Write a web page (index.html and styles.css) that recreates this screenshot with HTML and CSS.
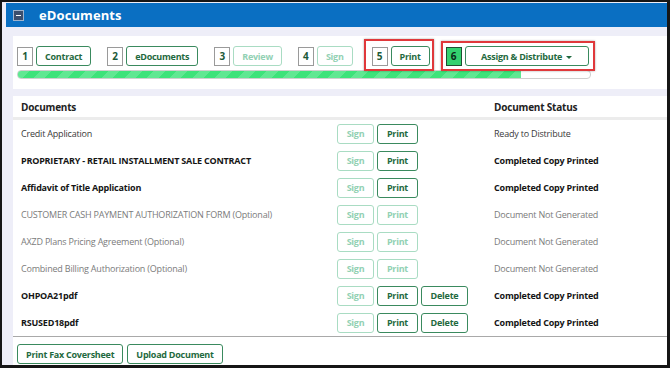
FILE: index.html
```html
<!DOCTYPE html>
<html lang="en">
<head>
  <meta charset="UTF-8" />
  <title>eDocuments</title>
  <link rel="stylesheet" href="styles.css">
</head>
<body>
  <div class="frame">
    <div class="panel-header">
      <span class="collapse-btn"><span class="minus"></span></span>
      <span class="panel-title">eDocuments</span>
    </div>

    <div class="panel-body">
      <div class="stepper">
        <div class="steps">
          <div class="step"><span class="step-num">1</span><button class="btn">Contract</button></div>
          <div class="step"><span class="step-num">2</span><button class="btn">eDocuments</button></div>
          <div class="step"><span class="step-num">3</span><button class="btn disabled">Review</button></div>
          <div class="step"><span class="step-num">4</span><button class="btn disabled">Sign</button></div>
          <div class="step marked mark-5"><span class="step-num">5</span><button class="btn">Print</button></div>
          <div class="step marked mark-6"><span class="step-num active">6</span><button class="btn wide">Assign &amp; Distribute <span class="caret"></span></button></div>
        </div>
        <div class="progress">
          <div class="progress-fill" style="width: 88%"></div>
        </div>
      </div>

      <div class="docs">
        <div class="docs-head">
          <div class="col-name">Documents</div>
          <div class="col-actions"></div>
          <div class="col-status">Document Status</div>
        </div>

        <div class="doc-row">
          <div class="col-name">Credit Application</div>
          <div class="col-actions"><button class="btn disabled">Sign</button><button class="btn">Print</button></div>
          <div class="col-status">Ready to Distribute</div>
        </div>
        <div class="doc-row done">
          <div class="col-name">PROPRIETARY - RETAIL INSTALLMENT SALE CONTRACT</div>
          <div class="col-actions"><button class="btn disabled">Sign</button><button class="btn">Print</button></div>
          <div class="col-status">Completed Copy Printed</div>
        </div>
        <div class="doc-row done">
          <div class="col-name">Affidavit of Title Application</div>
          <div class="col-actions"><button class="btn disabled">Sign</button><button class="btn">Print</button></div>
          <div class="col-status">Completed Copy Printed</div>
        </div>
        <div class="doc-row optional">
          <div class="col-name">CUSTOMER CASH PAYMENT AUTHORIZATION FORM (Optional)</div>
          <div class="col-actions"><button class="btn disabled">Sign</button><button class="btn disabled">Print</button></div>
          <div class="col-status">Document Not Generated</div>
        </div>
        <div class="doc-row optional">
          <div class="col-name">AXZD Plans Pricing Agreement (Optional)</div>
          <div class="col-actions"><button class="btn disabled">Sign</button><button class="btn disabled">Print</button></div>
          <div class="col-status">Document Not Generated</div>
        </div>
        <div class="doc-row optional">
          <div class="col-name">Combined Billing Authorization (Optional)</div>
          <div class="col-actions"><button class="btn disabled">Sign</button><button class="btn disabled">Print</button></div>
          <div class="col-status">Document Not Generated</div>
        </div>
        <div class="doc-row done">
          <div class="col-name">OHPOA21pdf</div>
          <div class="col-actions"><button class="btn disabled">Sign</button><button class="btn">Print</button><button class="btn">Delete</button></div>
          <div class="col-status">Completed Copy Printed</div>
        </div>
        <div class="doc-row done">
          <div class="col-name">RSUSED18pdf</div>
          <div class="col-actions"><button class="btn disabled">Sign</button><button class="btn">Print</button><button class="btn">Delete</button></div>
          <div class="col-status">Completed Copy Printed</div>
        </div>

        <div class="docs-footer">
          <button class="btn">Print Fax Coversheet</button>
          <button class="btn">Upload Document</button>
        </div>
      </div>
    </div>
  </div>
</body>
</html>
```

FILE: styles.css
```css
* {
  box-sizing: border-box;
}

body {
  margin: 0;
  font-family: "Open Sans", "Liberation Sans", sans-serif;
  background-color: #fff;
}

.frame {
  width: 670px;
  height: 368px;
  border: 2px solid #161616;
  border-right-width: 3px;
  border-bottom-width: 3px;
  background-color: #eeeef8;
  padding-left: 4px;
  overflow: hidden;
}

/* cabecera azul */
.panel-header {
  height: 24px;
  margin-top: 1px;
  background-color: #0a6fc2;
  display: flex;
  align-items: center;
  padding-left: 7px;
}

.collapse-btn {
  width: 11px;
  height: 11px;
  background-color: #3b4f6e;
  border: 1px solid #9fb3cc;
  display: flex;
  align-items: center;
  justify-content: center;
}

.minus {
  width: 5px;
  height: 1px;
  background-color: #fff;
}

.panel-title {
  color: #fff;
  font-weight: 700;
  font-size: 13px;
  margin-left: 15px;
  letter-spacing: 0.1px;
}

.panel-body {
  padding: 9px 0 0 7px;
}

/* pasos */
.stepper {
  background-color: #fff;
  height: 53px;
  padding: 10px 0 0 4px;
}

.steps {
  display: flex;
  gap: 16px;
}

.step {
  display: flex;
  align-items: center;
  gap: 3px;
  position: relative;
}

.step-num {
  width: 16px;
  height: 19px;
  border: 1px solid #9a9a9a;
  font-size: 10px;
  font-weight: 700;
  color: #1d5a38;
  display: flex;
  align-items: center;
  justify-content: center;
}

.step-num.active {
  background-color: #33d16f;
  border-color: #1e4f32;
  color: #0c2a18;
}

.mark-5 {
  margin-left: 3px;
}

.marked::after {
  content: "";
  position: absolute;
  border: 2px solid #e0383b;
  box-shadow: 0 0 2px rgba(0, 0, 0, 0.35);
  pointer-events: none;
}

.mark-5::after {
  top: -7px;
  bottom: -5px;
  left: -8px;
  right: -4px;
}

.mark-6::after {
  top: -5px;
  bottom: -5px;
  left: -5px;
  right: -6px;
}

.btn {
  height: 20px;
  padding: 0 8px;
  border: 1px solid #3a8a5e;
  border-radius: 3px;
  background-color: #fff;
  color: #1f6a40;
  font-family: inherit;
  font-weight: 700;
  font-size: 9px;
  letter-spacing: -0.25px;
  cursor: pointer;
  white-space: nowrap;
}

.btn.disabled {
  border-color: #a9dcc3;
  color: #92d1b3;
}

.btn.wide {
  width: 124px;
}

.caret {
  display: inline-block;
  width: 0;
  height: 0;
  border-left: 3px solid transparent;
  border-right: 3px solid transparent;
  border-top: 3px solid #1f6a40;
  vertical-align: middle;
  margin-left: 2px;
}

.progress {
  width: 574px;
  height: 9px;
  margin-top: 4px;
  border: 1px solid #cfcfcf;
  border-radius: 4px;
  overflow: hidden;
  background-color: #fff;
}

.progress-fill {
  height: 100%;
  background-color: #3de37a;
  background-image: repeating-linear-gradient(135deg, rgba(255, 255, 255, 0.18) 0 8px, transparent 8px 16px);
}

/* tabla de documentos */
.docs {
  margin-top: 7px;
  background-color: #fff;
}

.docs-head,
.doc-row {
  display: grid;
  grid-template-columns: 324px 157px 1fr;
  align-items: center;
}

.docs-head {
  height: 24px;
  border-bottom: 3px solid #ececec;
  font-weight: 700;
  font-size: 10px;
  letter-spacing: -0.2px;
  color: #222;
}

.doc-row {
  height: 27px;
  font-size: 9px;
  letter-spacing: -0.2px;
  color: #3a3a3a;
}

.col-name {
  padding-left: 8px;
}

.col-actions {
  display: flex;
  gap: 3px;
}

.col-actions .btn {
  width: 37px;
  padding: 0;
}

.col-actions .btn + .btn {
  width: 41px;
}

.col-actions .btn + .btn + .btn {
  width: 47px;
}

.doc-row.done {
  font-weight: 700;
  color: #151515;
}

.doc-row.optional {
  color: #7b7b7b;
}

.docs-footer {
  border-top: 1px solid #a9a9a9;
  padding: 7px 4px 0;
  display: flex;
  gap: 4px;
  height: 40px;
}
```
